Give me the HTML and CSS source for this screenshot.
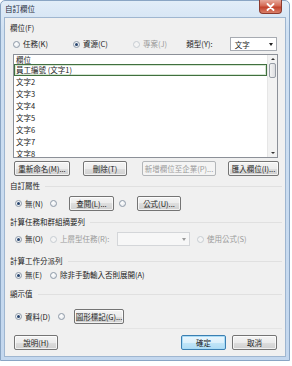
FILE: index.html
```html
<!DOCTYPE html>
<html lang="zh-Hant">
<head>
  <meta charset="UTF-8">
  <meta name="viewport" content="width=device-width, initial-scale=1.0">
  <title>自訂欄位</title>
  <link rel="stylesheet" href="styles.css">
</head>
<body>

  <div class="window">
    <div class="titlebar">
      <span class="titlebar__text">自訂欄位</span>
      <span class="titlebar__close">
        <svg width="9" height="8" viewBox="0 0 9 8">
          <path d="M1.5 1 L7.5 7 M7.5 1 L1.5 7" stroke="#fff" stroke-width="1.8" stroke-linecap="round"/>
        </svg>
      </span>
    </div>

    <div class="client">
      <!-- fields -->
      <div class="label">欄位(F)</div>
      <div class="row row--type">
        <span class="radio"></span><span class="radio-text">任務(K)</span>
        <span class="radio radio--on"></span><span class="radio-text">資源(C)</span>
        <span class="radio radio--off"></span><span class="radio-text text--off">專案(J)</span>
        <span class="type-label">類型(Y):</span>
        <span class="combo combo--type">文字<span class="combo__arrow"></span></span>
      </div>

      <div class="list">
        <div class="list__items">
          <div class="list__head">欄位</div>
          <div class="list__item list__item--selected">員工編號 (文字1)</div>
          <div class="list__item">文字2</div>
          <div class="list__item">文字3</div>
          <div class="list__item">文字4</div>
          <div class="list__item">文字5</div>
          <div class="list__item">文字6</div>
          <div class="list__item">文字7</div>
          <div class="list__item">文字8</div>
        </div>
        <div class="scrollbar">
          <span class="scrollbar__arrow scrollbar__arrow--up"></span>
          <span class="scrollbar__thumb"></span>
          <span class="scrollbar__track"></span>
          <span class="scrollbar__arrow scrollbar__arrow--down"></span>
        </div>
      </div>

      <div class="row row--list-buttons">
        <span class="btn btn--rename">重新命名(M)...</span>
        <span class="btn btn--delete">刪除(T)</span>
        <span class="btn btn--off btn--enterprise">新增欄位至企業(P)...</span>
        <span class="btn btn--import">匯入欄位(I)...</span>
      </div>

      <!-- custom attributes -->
      <div class="label label--line label--attr"><span>自訂屬性</span></div>
      <div class="row row--attr">
        <span class="radio radio--on"></span><span class="radio-text w-none">無(N)</span>
        <span class="radio"></span>
        <span class="btn btn--lookup">查閱(L)...</span>
        <span class="radio"></span>
        <span class="btn btn--formula">公式(U)...</span>
      </div>

      <!-- summary rows -->
      <div class="label label--line label--summary"><span>計算任務和群組摘要列</span></div>
      <div class="row row--summary">
        <span class="radio radio--on"></span><span class="radio-text w-none">無(O)</span>
        <span class="radio radio--off"></span><span class="radio-text text--off w-rollup">上層型任務(R):</span>
        <span class="combo combo--off">
          <span class="combo__arrow"></span>
        </span>
        <span class="radio radio--off"></span><span class="radio-text text--off">使用公式(S)</span>
      </div>

      <!-- assignment rows -->
      <div class="label label--line label--assign"><span>計算工作分派列</span></div>
      <div class="row row--assign">
        <span class="radio radio--on"></span><span class="radio-text w-none">無(E)</span>
        <span class="radio"></span><span class="radio-text">除非手動輸入否則展開(A)</span>
      </div>

      <!-- display values -->
      <div class="label label--line label--display"><span>顯示值</span></div>
      <div class="row row--display">
        <span class="radio radio--on"></span><span class="radio-text w-data">資料(D)</span>
        <span class="radio"></span>
        <span class="btn btn--indicator">圖形標記(G)...</span>
      </div>

      <div class="divider"></div>

      <div class="row row--footer">
        <span class="btn btn--help">說明(H)</span>
        <span class="btn btn--default btn--ok">確定</span>
        <span class="btn btn--cancel">取消</span>
      </div>
    </div>
    <span class="grip"></span>
  </div>

</body>
</html>
```

FILE: styles.css
```css
:root {
  --clr-text: #1b1b1b;
  --clr-off: #9a9a9a;
  --clr-face: #f0f0f0;
  --clr-frame: #c3d7ee;

  font-family: "Noto Sans CJK TC", "Noto Sans", sans-serif;
  font-size: 7.5px;
  color: var(--clr-text);
}

* {
  box-sizing: border-box;
}

body {
  margin: 0;
  background: #fff;
}

.window {
  width: 290px;
  height: 361px;
  position: relative;
  display: flex;
  flex-direction: column;
  background: linear-gradient(#e2edf8, #cfe0f2 30px, var(--clr-frame));
  border: 1px solid #8aa5c4;
  border-radius: 5px 5px 0 0;
}

.titlebar {
  height: 16px;
  flex: none;
  display: flex;
  align-items: center;
  padding-left: 4px;
  position: relative;
}

.titlebar__text {
  font-size: 7.5px;
  line-height: 10px;
  color: #1e2a3a;
}

.titlebar__close {
  position: absolute;
  top: -1px;
  left: 258px;
  width: 23px;
  height: 14px;
  display: flex;
  justify-content: center;
  align-items: center;
  border: 1px solid #8d3a2d;
  border-top: 0;
  border-radius: 0 0 4px 4px;
  background: linear-gradient(#e7a99b, #d46a55 45%, #c2422c 55%, #d9806a);
}

.client {
  flex: 1 1 auto;
  margin: 0 3px 3px 3px;
  background: var(--clr-face);
  border: 1px solid #9fb6d0;
  padding: 5px 8px 0 5px;
  display: flex;
  flex-direction: column;
}

.label {
  height: 10px;
  line-height: 10px;
  white-space: nowrap;
}

.label--line {
  display: flex;
  align-items: center;
  gap: 5px;
}

.label--line::after {
  content: '';
  flex: 1 1 auto;
  height: 1px;
  background: #e0e0e0;
  margin-right: -5px;
}

.label--attr { margin-top: 5px; }
.label--summary { margin-top: 6px; }
.label--assign { margin-top: 10px; }
.label--display { margin-top: 7px; }

.row {
  display: flex;
  align-items: center;
  white-space: nowrap;
  padding-left: 3px;
}

.row--type {
  height: 14px;
  margin-top: 4px;
  padding-left: 3px;
}

.radio {
  width: 7px;
  height: 7px;
  flex: none;
  border-radius: 50%;
  border: 1px solid #8e9aa8;
  background: radial-gradient(circle at 40% 35%, #ffffff, #dfe3e8);
  position: relative;
}

.radio--on::after {
  content: '';
  position: absolute;
  top: 1px;
  left: 1px;
  width: 3px;
  height: 3px;
  border-radius: 50%;
  background: #27456f;
}

.radio--off {
  border-color: #c6ccd2;
  background: #f4f4f4;
}

.radio-text {
  margin-left: 3px;
  line-height: 10px;
}

.text--off {
  color: var(--clr-off);
}

.row--type .radio-text { width: 52px; }
.row--type .radio-text.text--off { width: 45px; }

.type-label {
  width: 45px;
  line-height: 10px;
}

.combo {
  height: 14px;
  display: flex;
  align-items: center;
  padding-left: 4px;
  border: 1px solid #a7abb2;
  background: #fff;
  position: relative;
}

.combo--type {
  width: 49px;
}

.combo__arrow {
  margin-left: auto;
  margin-right: 3px;
  width: 0;
  height: 0;
  border-left: 2.5px solid transparent;
  border-right: 2.5px solid transparent;
  border-top: 3px solid #222;
}

.combo--off {
  width: 73px;
  margin-left: 4px;
  margin-right: 7px;
  border-color: #d4d6d9;
  background: #f7f7f7;
}

.combo--off .combo__arrow {
  border-top-color: #9a9a9a;
}

/* field list */
.list {
  height: 104px;
  margin-top: 3px;
  margin-left: 3px;
  width: 265px;
  display: flex;
  border: 1px solid #8c9098;
  background: #fff;
  overflow: hidden;
}

.list__items {
  flex: 1 1 auto;
  display: flex;
  flex-direction: column;
}

.list__head {
  height: 9px;
  line-height: 9px;
  padding-left: 2px;
}

.list__item {
  height: 12px;
  line-height: 12px;
  padding-left: 2px;
  flex: none;
}

.list__item--selected {
  border: 1px solid #416f3f;
  box-shadow: inset 0 0 0 1px #d4e6d2;
  line-height: 10px;
  padding-left: 1px;
}

.scrollbar {
  width: 10px;
  flex: none;
  display: flex;
  flex-direction: column;
  align-items: center;
  background: #f2f2f2;
  border-left: 1px solid #e6e6e6;
}

.scrollbar__arrow {
  height: 8px;
  flex: none;
  display: flex;
  align-items: center;
  justify-content: center;
}

.scrollbar__arrow::after {
  content: '';
  border-left: 2px solid transparent;
  border-right: 2px solid transparent;
}

.scrollbar__arrow--up::after { border-bottom: 2px solid #333; }
.scrollbar__arrow--down::after { border-top: 2px solid #333; }

.scrollbar__thumb {
  width: 7px;
  height: 15px;
  flex: none;
  border: 1px solid #979da6;
  border-radius: 2px;
  background: linear-gradient(90deg, #f4f4f4, #dcdde0);
}

.scrollbar__track {
  flex: 1 1 auto;
}

/* buttons */
.btn {
  height: 15px;
  flex: none;
  display: flex;
  align-items: center;
  justify-content: center;
  border: 1px solid #747474;
  border-radius: 2px;
  background: linear-gradient(#f4f4f4, #ececec 50%, #dedede 50%, #d0d0d0);
  box-shadow: inset 0 0 0 1px rgba(255, 255, 255, 0.7);
  line-height: 10px;
}

.btn--off {
  color: var(--clr-off);
  border-color: #b3b6b9;
  background: #f4f4f4;
  box-shadow: none;
}

.btn--default {
  border-color: #3c7fb1;
  background: linear-gradient(#eaf6fd, #dcf0fb 50%, #c2e6f8 50%, #b0dcf4);
  box-shadow: inset 0 0 0 1px #a9dcf7;
}

.row--list-buttons {
  margin-top: 3px;
  padding-left: 4px;
}

.btn--rename { width: 56px; }
.btn--delete { width: 44px; margin-left: 13px; }
.btn--enterprise { width: 74px; margin-left: 15px; }
.btn--import { width: 51px; margin-left: 12px; }

.row--attr {
  height: 15px;
  margin-top: 5px;
  padding-left: 5px;
}

.w-none { width: 25px; }
.w-data { width: 33px; }
.w-rollup { width: 53px; }

.btn--lookup { width: 45px; margin-left: 12px; }
.row--attr .btn--lookup + .radio { margin-left: 5px; }
.btn--formula { width: 44px; margin-left: 11px; }

.row--summary {
  height: 14px;
  margin-top: 5px;
  padding-left: 5px;
}

.row--assign {
  height: 14px;
  margin-top: 2px;
  padding-left: 5px;
}

.row--display {
  height: 15px;
  margin-top: 10px;
  padding-left: 5px;
}

.btn--indicator { width: 50px; margin-left: 9px; }

.divider {
  height: 1px;
  margin-top: 4px;
  margin-right: -5px;
  margin-left: 100px;
  background: #e4e4e4;
}

.row--footer {
  height: 15px;
  margin-top: 6px;
  padding-left: 4px;
}

.btn--help { width: 44px; }
.btn--ok { width: 45px; margin-left: auto; }
.btn--cancel { width: 45px; margin-left: 6px; }

.grip {
  position: absolute;
  right: -1px;
  bottom: -1px;
  width: 5px;
  height: 5px;
  background: radial-gradient(circle, #707d8c 40%, transparent 45%) 0 0 / 2px 2px;
}
```
